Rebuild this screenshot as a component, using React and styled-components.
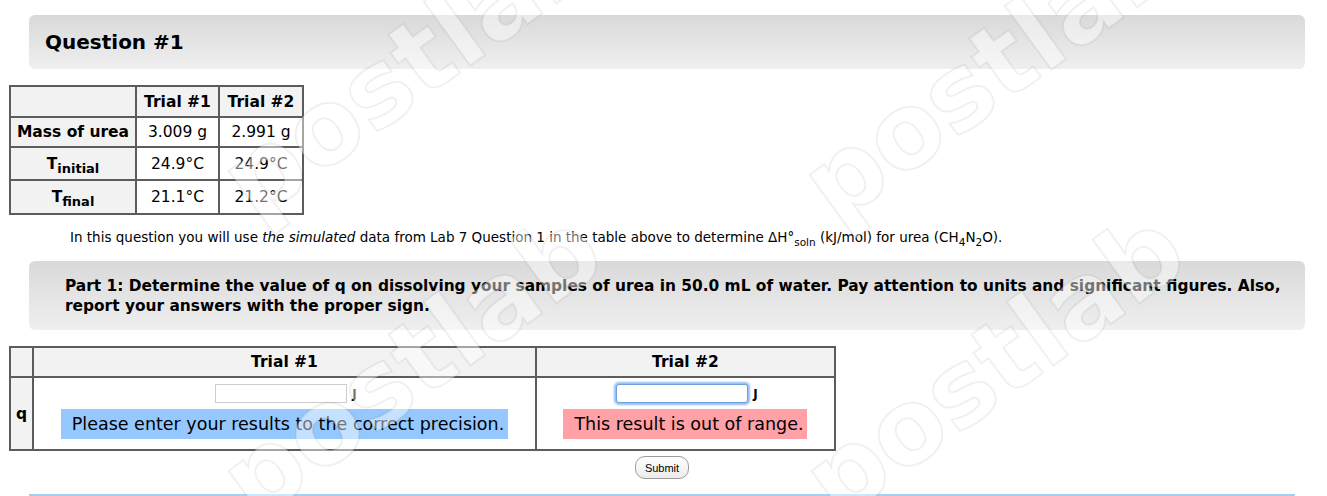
import React from 'react'
import styled, { createGlobalStyle } from 'styled-components'

const GlobalStyle = createGlobalStyle`
  html, body {
    margin: 0;
    padding: 0;
    background: #fff;
  }
  body {
    font-family: "DejaVu Sans", Verdana, sans-serif;
    color: #000;
  }
`

const Page = styled.div`
  position: relative;
  width: 1327px;
  height: 496px;
  overflow: hidden;
  padding: 15px 0 0 9px;
  box-sizing: border-box;
`

const Banner = styled.div`
  margin: ${p => p.$top || '0'} 22px 0 20px;
  border-radius: 6px;
  background: linear-gradient(to bottom, #d9d9d9, #efefef);
  padding: ${p => p.$pad};
  font-weight: bold;
  font-size: ${p => p.$size};
  line-height: ${p => p.$lh};
`

const DataTable = styled.table`
  border-collapse: collapse;
  margin-top: ${p => p.$top};
  width: ${p => p.$width};
  font-size: 15.5px;
  border: 2px solid #5c5c5c;
`

const HeadCell = styled.th`
  background: #f2f2f2;
  border: 2px solid #5c5c5c;
  font-weight: bold;
  text-align: center;
  padding: 0 5px;
  height: ${p => p.$h || 'auto'};
  width: ${p => p.$w || 'auto'};
  box-sizing: border-box;
  sub {
    font-size: 13px;
    vertical-align: -4px;
    line-height: 0;
  }
`

const Cell = styled.td`
  border: 2px solid #5c5c5c;
  text-align: center;
  padding: ${p => p.$pad || '0 5px'};
  background: #fff;
`

const Intro = styled.p`
  margin: 13px 0 0 61px;
  font-size: 13.5px;
  line-height: 18px;
  sub {
    font-size: 10.5px;
    vertical-align: -4px;
    line-height: 0;
  }
`

const AnswerLine = styled.div`
  display: flex;
  justify-content: center;
  align-items: center;
  gap: 5px;
  font-size: 12px;
  font-weight: bold;
  margin-left: 3px;
`

const Field = styled.input`
  width: 132px;
  height: 19px;
  box-sizing: border-box;
  border: 1px solid ${p => (p.$focus ? '#6e9fe0' : '#cdcdcd')};
  box-shadow: ${p => (p.$focus ? '0 0 2px 2px #93bef5' : 'none')};
  border-radius: ${p => (p.$focus ? '3px' : '0')};
  outline: none;
  padding: 0 3px;
  font-size: 12px;
`

const Message = styled.div`
  display: inline-block;
  margin-top: 6px;
  padding: 0 4px 0 11px;
  height: 30px;
  line-height: 30px;
  font-size: 17.5px;
  background: ${p => (p.$kind === 'info' ? '#94c8ff' : '#ffa1a7')};
`

const Actions = styled.div`
  display: flex;
  justify-content: center;
  margin-top: 5px;
  padding-right: 12px;
`

const SubmitButton = styled.button`
  font-family: "Liberation Sans", Arial, sans-serif;
  font-size: 11px;
  height: 23px;
  padding: 0 9px;
  border-radius: 10px;
  border: 1px solid #9b9b9b;
  background: linear-gradient(to bottom, #ffffff, #ececec);
  color: #000;
`

const Rule = styled.div`
  margin: 15px 32px 0 20px;
  border-top: 2px solid #a3d0f5;
`

const Watermark = styled.svg`
  position: absolute;
  left: 0;
  top: 0;
  pointer-events: none;
  text {
    font-family: "DejaVu Sans", sans-serif;
    font-weight: bold;
    font-size: 104px;
    fill: rgba(255, 255, 255, 0.45);
    stroke: rgba(0, 0, 0, 0.06);
    stroke-width: 2px;
  }
`

const marks = [
  [255, 222],
  [836, 226],
  [255, 522],
  [838, 522],
]

function App() {
  return (
    <>
      <GlobalStyle />
      <Page>
        <Banner $pad="13px 16px" $size="20px" $lh="28px">Question #1</Banner>

        <DataTable $top="16px">
          <thead>
            <tr>
              <HeadCell $h="31px" $w="126px"></HeadCell>
              <HeadCell $w="83px">Trial #1</HeadCell>
              <HeadCell $w="84px">Trial #2</HeadCell>
            </tr>
          </thead>
          <tbody>
            <tr>
              <HeadCell $h="30px">Mass of urea</HeadCell>
              <Cell>3.009 g</Cell>
              <Cell>2.991 g</Cell>
            </tr>
            <tr>
              <HeadCell $h="33px">T<sub>initial</sub></HeadCell>
              <Cell>24.9°C</Cell>
              <Cell>24.9°C</Cell>
            </tr>
            <tr>
              <HeadCell $h="34px">T<sub>final</sub></HeadCell>
              <Cell>21.1°C</Cell>
              <Cell>21.2°C</Cell>
            </tr>
          </tbody>
        </DataTable>

        <Intro>
          In this question you will use <em>the simulated</em> data from Lab 7 Question 1 in the table above to
          determine ΔH°<sub>soln</sub> (kJ/mol) for urea (CH<sub>4</sub>N<sub>2</sub>O).
        </Intro>

        <Banner $top="15px" $pad="15px 10px 14px 36px" $size="15.4px" $lh="20px">
          Part 1: Determine the value of q on dissolving your samples of urea in 50.0 mL of water. Pay attention to
          units and significant figures. Also, report your answers with the proper sign.
        </Banner>

        <DataTable $top="16px" $width="827px">
          <thead>
            <tr>
              <HeadCell $h="30px" $w="22px"></HeadCell>
              <HeadCell $w="505px">Trial #1</HeadCell>
              <HeadCell $w="300px">Trial #2</HeadCell>
            </tr>
          </thead>
          <tbody>
            <tr>
              <HeadCell $h="73px">q</HeadCell>
              <Cell $pad="6px 4px 10px">
                <AnswerLine>
                  <Field type="text" />
                  <span>J</span>
                </AnswerLine>
                <Message $kind="info">Please enter your results to the correct precision.</Message>
              </Cell>
              <Cell $pad="6px 4px 10px">
                <AnswerLine>
                  <Field type="text" $focus />
                  <span>J</span>
                </AnswerLine>
                <Message $kind="error">This result is out of range.</Message>
              </Cell>
            </tr>
          </tbody>
        </DataTable>

        <Actions>
          <SubmitButton>Submit</SubmitButton>
        </Actions>

        <Rule />

        <Watermark width="1327" height="496" viewBox="0 0 1327 496">
          {marks.map(([x, y]) => (
            <text key={`${x}-${y}`} x={x} y={y} transform={`rotate(-36 ${x} ${y})`}>
              postlab
            </text>
          ))}
        </Watermark>
      </Page>
    </>
  )
}

export default App
